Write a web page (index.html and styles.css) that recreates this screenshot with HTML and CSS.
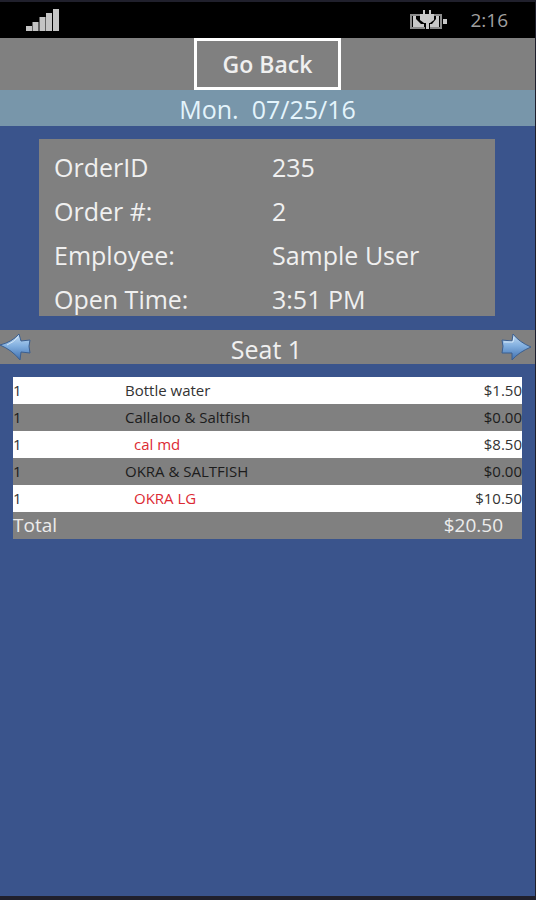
FILE: index.html
```html
<!DOCTYPE html>
<html lang="en">
<head>
    <meta charset="UTF-8">
    <meta name="viewport" content="width=device-width, initial-scale=1.0">
    <title>Order 235</title>
    <link rel="stylesheet" href="styles.css">
</head>
<body>
    <div class="status-bar">
        <svg class="signal" width="34" height="22" viewBox="0 0 34 22" aria-hidden="true">
            <path fill="#c4c4c4" d="M0 17h6v5H0zM6.500 13h6v9h-6zM13.500 8h6v14h-6zM20 4h6v18h-6zM27 0h6v22h-6z"/>
        </svg>
        <svg class="battery" width="38" height="20" viewBox="0 0 38 20" aria-hidden="true">
            <path fill="none" stroke="#8c8c8c" stroke-width="2" d="M12 5H1v13h14M23 5h8v13H20"/>
            <path fill="#c8c8c8" d="M3 6h3v3l5 5h3v3H3zM29 6h-3v3l-4 5h-2v3h9zM33 9h4v5h-4z"/>
            <path fill="#c8c8c8" d="M13 0h2v4h4V0h2v4h3v6l-4 3h-1v6h-3v-6h-2l-4-3V4h3z"/>
        </svg>
        <span class="clock">2:16</span>
    </div>

    <header class="header">
        <button type="button" class="back-button">Go Back</button>
    </header>
    <div class="date-bar">Mon.&nbsp; 07/25/16</div>

    <main>
        <dl class="order-info">
            <dt>OrderID</dt>
            <dd>235</dd>
            <dt>Order #:</dt>
            <dd>2</dd>
            <dt>Employee:</dt>
            <dd>Sample User</dd>
            <dt>Open Time:</dt>
            <dd>3:51 PM</dd>
        </dl>

        <div class="seat-bar">
            <button type="button" class="seat-button" aria-label="Previous seat">
                <svg width="32" height="28" viewBox="0 0 32 28" aria-hidden="true">
                    <defs>
                        <linearGradient id="arrowFill" x1="0" y1="0" x2="0" y2="1">
                            <stop offset="0" stop-color="#c3dcf2"/>
                            <stop offset="0.45" stop-color="#83b0e0"/>
                            <stop offset="1" stop-color="#3f6fae"/>
                        </linearGradient>
                    </defs>
                    <path fill="url(#arrowFill)" stroke="#3b5f90" stroke-linejoin="round" d="M0 12Q12 9 19 1L21 8L30 7Q28 13 30 20L21 19L20 27Q12 17 0 12z"/>
                    <path fill="none" stroke="#d3e6f6" d="M7 12Q14 9 18 4"/>
                </svg>
            </button>
            <h2>Seat 1</h2>
            <button type="button" class="seat-button" aria-label="Next seat">
                <svg width="32" height="28" viewBox="0 0 32 28" aria-hidden="true">
                    <path fill="url(#arrowFill)" stroke="#3b5f90" stroke-linejoin="round" d="M30 14Q18 9 12 1L11 8L1 7Q3 13 1 20L11 20L11 27Q18 19 30 14z"/>
                    <path fill="none" stroke="#d3e6f6" d="M3 9h9l1-5"/>
                </svg>
            </button>
        </div>

        <table class="items">
            <tbody>
                <tr>
                    <td class="qty">1</td>
                    <td>Bottle water</td>
                    <td class="price">$1.50</td>
                </tr>
                <tr>
                    <td class="qty">1</td>
                    <td>Callaloo &amp; Saltfish</td>
                    <td class="price">$0.00</td>
                </tr>
                <tr>
                    <td class="qty">1</td>
                    <td class="modifier">cal md</td>
                    <td class="price">$8.50</td>
                </tr>
                <tr>
                    <td class="qty">1</td>
                    <td>OKRA &amp; SALTFISH</td>
                    <td class="price">$0.00</td>
                </tr>
                <tr>
                    <td class="qty">1</td>
                    <td class="modifier">OKRA LG</td>
                    <td class="price">$10.50</td>
                </tr>
            </tbody>
            <tfoot>
                <tr>
                    <th colspan="2" scope="row">Total</th>
                    <td class="price">$20.50</td>
                </tr>
            </tfoot>
        </table>
    </main>
</body>
</html>
```
FILE: styles.css
```css
* {
    margin: 0;
    padding: 0;
    box-sizing: border-box;
}

body {
    min-height: 100vh;
    background-color: #3a548c;
    border: solid #20202c;
    border-width: 2px 1px 4px 0;
    color: #f0f0f0;
    font-family: "Segoe UI", "Open Sans", "Noto Sans", sans-serif;
    font-size: 25px;
    line-height: 34px;
}

button {
    font: inherit;
    color: inherit;
    background: none;
    border: none;
    cursor: pointer;
}

svg {
    display: block;
}

.status-bar {
    display: flex;
    align-items: center;
    height: 36px;
    padding: 0 27px 0 26px;
    background-color: #000;
}

.battery {
    margin-left: auto;
}

.clock {
    margin-left: 22px;
    color: #a0a0a0;
    font-size: 19px;
}

.header {
    display: flex;
    justify-content: center;
    background-color: #808080;
}

.back-button {
    height: 52px;
    padding: 0 26px;
    border: 3px solid #fff;
    font-size: 23px;
    font-weight: 600;
}

.date-bar {
    padding-top: 2px;
    background-color: #7896aa;
    color: #e4f4fc;
    text-align: center;
}

.order-info {
    display: grid;
    grid-template-columns: 218px 1fr;
    row-gap: 10px;
    margin: 13px 40px 14px 39px;
    padding: 11px 15px 0;
    background-color: #808080;
}

.seat-bar {
    display: flex;
    align-items: center;
    justify-content: space-between;
    padding-right: 2px;
    background-color: #808080;
}

.seat-bar h2 {
    padding-top: 4px;
    font-size: 25px;
    font-weight: 400;
    line-height: 30px;
}

.items {
    width: calc(100% - 26px);
    margin: 13px;
    border-collapse: collapse;
    background-color: #808080;
    color: #1c1c1c;
    font-size: 15px;
    line-height: 27px;
}

.items tbody tr:nth-child(odd) {
    background-color: #fff;
    color: #333;
}

.items .qty {
    width: 112px;
}

.items .price {
    text-align: right;
}

.items .modifier {
    padding-left: 9px;
    color: #dc2a34;
}

.items tfoot th,
.items tfoot td {
    color: #ececec;
    font-size: 19px;
    font-weight: 400;
    text-align: left;
}

.items tfoot .price {
    padding-right: 19px;
}
```
